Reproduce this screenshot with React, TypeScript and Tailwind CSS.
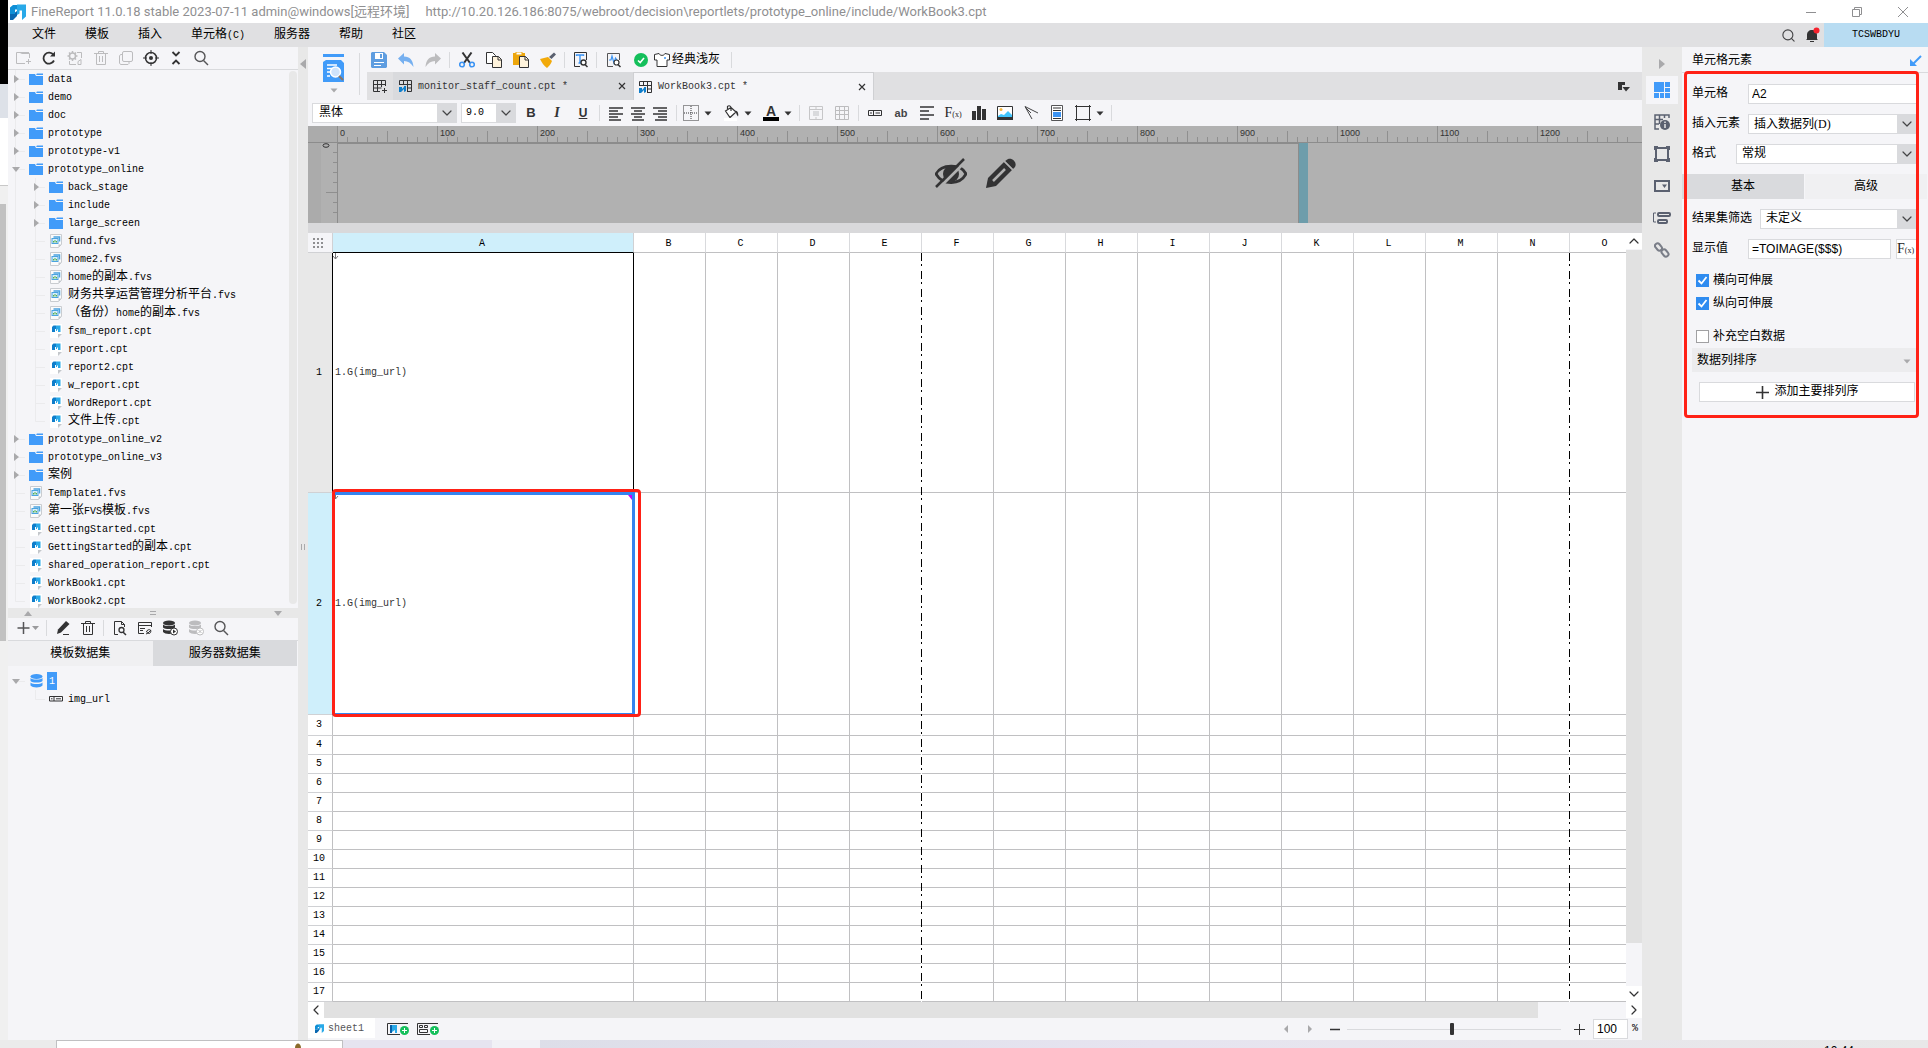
import { ReactNode } from "react";
import { ChevronDown, ChevronLeft, ChevronRight, ChevronUp, Search } from "lucide-react";

type Kind = "folder" | "fvs" | "cpt";

const files: { name: string; kind: Kind; level?: number; open?: boolean; last?: boolean }[] = [
  { name: "data", kind: "folder" },
  { name: "demo", kind: "folder" },
  { name: "doc", kind: "folder" },
  { name: "prototype", kind: "folder" },
  { name: "prototype-v1", kind: "folder" },
  { name: "prototype_online", kind: "folder", open: true },
  { name: "back_stage", kind: "folder", level: 2 },
  { name: "include", kind: "folder", level: 2 },
  { name: "large_screen", kind: "folder", level: 2 },
  { name: "fund.fvs", kind: "fvs", level: 2 },
  { name: "home2.fvs", kind: "fvs", level: 2 },
  { name: "home的副本.fvs", kind: "fvs", level: 2 },
  { name: "财务共享运营管理分析平台.fvs", kind: "fvs", level: 2 },
  { name: "（备份）home的副本.fvs", kind: "fvs", level: 2 },
  { name: "fsm_report.cpt", kind: "cpt", level: 2 },
  { name: "report.cpt", kind: "cpt", level: 2 },
  { name: "report2.cpt", kind: "cpt", level: 2 },
  { name: "w_report.cpt", kind: "cpt", level: 2 },
  { name: "WordReport.cpt", kind: "cpt", level: 2 },
  { name: "文件上传.cpt", kind: "cpt", level: 2, last: true },
  { name: "prototype_online_v2", kind: "folder" },
  { name: "prototype_online_v3", kind: "folder" },
  { name: "案例", kind: "folder" },
  { name: "Template1.fvs", kind: "fvs" },
  { name: "第一张FVS模板.fvs", kind: "fvs" },
  { name: "GettingStarted.cpt", kind: "cpt" },
  { name: "GettingStarted的副本.cpt", kind: "cpt" },
  { name: "shared_operation_report.cpt", kind: "cpt" },
  { name: "WorkBook1.cpt", kind: "cpt" },
  { name: "WorkBook2.cpt", kind: "cpt", last: true },
];

const menus = ["文件", "模板", "插入", "单元格(C)", "服务器", "帮助", "社区"];
const columns = "ABCDEFGHIJKLMNO".split("");
const rows = Array.from({ length: 17 }, (_, i) => i + 1);

// Latin letters are set smaller so that they take half the width of a Chinese one
function Txt({ text }: { text: string }) {
  return (
    <span className="whitespace-nowrap">
      {text.split(/([\x20-\x7e]+)/).filter(Boolean).map((run, i) =>
        /[\x20-\x7e]/.test(run) ? (
          <span key={i} className="text-[10px]">{run}</span>
        ) : (
          run
        )
      )}
    </span>
  );
}

function Svg(props: { w?: number; h?: number; children: ReactNode }) {
  const { w = 16, h = 16 } = props;
  return (
    <svg width={w} height={h} viewBox={`0 0 ${w} ${h}`} fill="none" className="block shrink-0" aria-hidden="true">
      {props.children}
    </svg>
  );
}

function Tool(props: { label: string; className?: string; children: ReactNode }) {
  return (
    <button
      type="button"
      aria-label={props.label}
      className={`flex h-full shrink-0 items-center justify-center ${props.className ?? "w-[26px]"}`}
    >
      {props.children}
    </button>
  );
}

function Sep() {
  return <div className="mx-[3px] h-4 w-px shrink-0 bg-[#d9dadd]" />;
}

function Caret({ color = "#333334" }: { color?: string }) {
  return (
    <Svg w={8} h={5}>
      <path d="M0.5 0.5h7L4 4.5z" fill={color} />
    </Svg>
  );
}

function Logo({ size = 16 }: { size?: number }) {
  return (
    <svg width={size} height={size} viewBox="0 0 16 16" className="block shrink-0" aria-hidden="true">
      <path d="M0 3.500L3 1h4v4.500H5V10H0z" fill="#0f8fd6" />
      <path d="M0 10h5V8.500L7 7v5l-4 4H0z" fill="#0967b0" />
      <path d="M7 .5h9v12L12 16V6.500H9.500v3L7 11z" fill="#29a9e8" />
    </svg>
  );
}

function FileIcon({ kind }: { kind: Kind }) {
  if (kind === "folder") {
    return (
      <Svg w={14} h={14}>
        <path d="M0 2h6l1 2h7v9H0z" fill="#419bf9" />
        <path d="M7 2.500l1-1h6v1.500H8z" fill="#419bf9" />
      </Svg>
    );
  }
  if (kind === "fvs") {
    return (
      <Svg w={14} h={14}>
        <path d="M1.500.5h11v10l-3 3h-8z" fill="#fbfbfc" stroke="#c9ccd0" />
        <path d="M4.500 3h6v4.500" stroke="#4aa3e0" strokeWidth="1.500" />
        <rect x="3" y="4.500" width="6" height="5" fill="#d9eefc" stroke="#4aa3e0" />
        <path d="M4.500 8.500V7m1.500 1.500V6m1.500 2.500V7" stroke="#55b04c" />
        <path d="M9.500 13.500v-3h3z" fill="#c4c7cb" />
      </Svg>
    );
  }
  return (
    <Svg w={14} h={14}>
      <path d="M1 0h12v10l-4 4H1z" fill="#fff" />
      <path d="M9 14v-4h4z" fill="#c4c7cb" />
      <path d="M3 3l1.500-1.500H7V5H6v3H3z" fill="#0f7ecb" />
      <path d="M7 1.500h4.500V8H9V5.500H8V7H7z" fill="#29a9e8" />
    </Svg>
  );
}

function Guide(props: { arrow?: "right" | "down"; half?: boolean }) {
  return (
    <Svg w={20} h={18}>
      <path d={props.half ? "M7.500 0v9.500H17" : "M7.500 0v18M7.500 9.500H17"} stroke="#ebebed" />
      {props.arrow === "right" && <path d="M6 5l5 4-5 4z" fill="#a9a9ab" />}
      {props.arrow === "down" && <path d="M4 7h8l-4 5z" fill="#a9a9ab" />}
    </Svg>
  );
}

function FileRow({ file }: { file: (typeof files)[number] }) {
  const arrow = file.kind === "folder" ? (file.open ? "down" : "right") : undefined;
  return (
    <li className="flex h-[18px] items-center">
      {file.level === 2 && (
        <Svg w={20} h={18}>
          <path d="M7.500 0v18" stroke="#ebebed" />
        </Svg>
      )}
      <Guide arrow={arrow} half={file.last} />
      <span className="mr-[5px] ml-px"><FileIcon kind={file.kind} /></span>
      <Txt text={file.name} />
    </li>
  );
}

function DbIcon({ color, children }: { color: string; children?: ReactNode }) {
  return (
    <Svg>
      <ellipse cx="7" cy="3" rx="6" ry="2.500" fill={color} />
      <path d="M1 4.500c2 2 10 2 12 0v3c-2 2-10 2-12 0zM1 9c2 2 10 2 12 0v3c-2 2.500-10 2.500-12 0z" fill={color} />
      {children}
    </Svg>
  );
}

function SearchIcon() {
  return (
    <Svg>
      <circle cx="7" cy="6.500" r="5" stroke="#555557" strokeWidth="1.400" />
      <path d="M10.500 10.500L15 15" stroke="#555557" strokeWidth="1.400" />
    </Svg>
  );
}

function LeftPanel() {
  return (
    <aside className="flex w-[290px] shrink-0 flex-col bg-[#f5f5f8]">
      <div className="flex h-[23px] shrink-0 items-center border-b border-[#d9dadd] pl-0.5">
        <Tool label="新建文件夹">
          <Svg>
            <path d="M14.500 8V3.500H7L5 2.500H1.500v11H10M5 2.500h9M13.500 9v5M11 11.500h5" stroke="#bcbcbe" />
          </Svg>
        </Tool>
        <Tool label="刷新">
          <Svg>
            <path d="M13 10.500A5.500 5.500 0 1 1 12.500 5" stroke="#333334" strokeWidth="1.800" />
            <path d="M14 1.500v5H9z" fill="#333334" />
          </Svg>
        </Tool>
        <Tool label="设置">
          <Svg>
            <circle cx="5.500" cy="6" r="3" stroke="#bcbcbe" strokeWidth="1.500" />
            <path d="M5.500 1v10M.5 6h10M2 2.500l7 7M9 2.500l-7 7" stroke="#bcbcbe" strokeDasharray="2 6" strokeWidth="1.500" />
            <path d="M10 2.500h4.500V8M2.500 11v3.500H9M11 14.500v-3l3-2v5z" stroke="#bcbcbe" />
          </Svg>
        </Tool>
        <Tool label="删除" className="w-[25px]">
          <Svg>
            <path d="M1 3.500h14M5.500 3V1.500h5V3M3.500 4v10.500h9V4M6.500 6v6M9.500 6v6" stroke="#bcbcbe" />
          </Svg>
        </Tool>
        <Tool label="复制" className="w-[25px]">
          <Svg>
            <rect x="4.500" y="1.500" width="10" height="10" rx="1.500" stroke="#bcbcbe" />
            <path d="M4 4.500H2.500L1.500 6v7l1 1.500H10l1-1V12" stroke="#bcbcbe" />
          </Svg>
        </Tool>
        <Tool label="定位" className="w-[25px]">
          <Svg>
            <circle cx="8" cy="8" r="5.500" stroke="#333334" strokeWidth="1.500" />
            <circle cx="8" cy="8" r="2" fill="#333334" />
            <path d="M8 0v4M8 12v4M0 8h4M12 8h4" stroke="#333334" />
          </Svg>
        </Tool>
        <Tool label="收起" className="w-[25px]">
          <Svg>
            <path d="M4.500 2L8 5.500 11.500 2M4.500 14L8 10.500l3.500 3.500" stroke="#333334" strokeWidth="1.800" />
          </Svg>
        </Tool>
        <Tool label="搜索模板"><SearchIcon /></Tool>
      </div>
      <div className="flex h-[538px] shrink-0 justify-between overflow-hidden">
        <ul>
          {files.map((file) => (
            <FileRow key={file.name} file={file} />
          ))}
        </ul>
        <div className="mt-px mr-px mb-1 w-2 rounded bg-[#e8e8e8]" />
      </div>
      <div className="flex h-[10px] shrink-0 items-center justify-between bg-[#e8e8e8] px-4">
        <Svg w={8} h={5}><path d="M0 5h8L4 0z" fill="#a9a9ab" /></Svg>
        <Svg w={6} h={4}><path d="M0 .5h6M0 3.500h6" stroke="#a9a9ab" /></Svg>
        <Svg w={8} h={5}><path d="M0 0h8L4 5z" fill="#a9a9ab" /></Svg>
      </div>
      <div className="flex h-[23px] shrink-0 items-center border-b border-[#d9dadd] pb-0.5 pl-[7px]">
        <Tool label="新增数据集" className="mr-0.5 w-[26px]">
          <Svg w={24}>
            <path d="M7.500 2v12M1.500 8h12" stroke="#555557" strokeWidth="1.500" />
            <path d="M16 6h7l-3.500 4z" fill="#9a9a9c" />
          </Svg>
        </Tool>
        <Sep />
        <Tool label="编辑" className="w-[25px]">
          <Svg>
            <path d="M2 14l1-4.500L11 1l3.500 3L6 12.500z" fill="#333334" />
            <path d="M8 14.500h6" stroke="#333334" />
          </Svg>
        </Tool>
        <Tool label="删除数据集" className="w-[25px]">
          <Svg>
            <path d="M1 3.500h14M5.500 3V1.500h5V3M3.500 4v10.500h9V4M6.500 6v6M9.500 6v6" stroke="#333334" />
          </Svg>
        </Tool>
        <Sep />
        <Tool label="预览" className="w-[25px]">
          <Svg>
            <path d="M6 14.500H2.500v-13h7l3 3V7M9.500 1.500v3h3" stroke="#333334" />
            <circle cx="9.500" cy="10" r="2.500" stroke="#333334" strokeWidth="1.300" />
            <path d="M11 12l3 3" stroke="#333334" strokeWidth="1.500" />
          </Svg>
        </Tool>
        <Tool label="连接" className="w-[25px]">
          <Svg>
            <path d="M7 13.500H1.500v-11h13V7M1.500 5.500h13M3 8.500h5M3 10.500h3" stroke="#333334" />
            <path d="M9 14l2-1 3-3M9.500 12c0-2 3-3 4-2s0 4-2 3.500z" stroke="#333334" />
          </Svg>
        </Tool>
        <Tool label="运行数据集">
          <DbIcon color="#333334">
            <circle cx="12" cy="11.500" r="3.500" fill="#fff" stroke="#333334" />
            <path d="M11 9.500l3 2-3 2z" fill="#333334" />
          </DbIcon>
        </Tool>
        <Tool label="清除数据集" className="w-[25px]">
          <DbIcon color="#bcbcbe">
            <circle cx="12" cy="11.500" r="3.500" fill="#fff" stroke="#bcbcbe" />
            <path d="M10.500 10l3 3M13.500 10l-3 3" stroke="#bcbcbe" />
          </DbIcon>
        </Tool>
        <Tool label="搜索数据集" className="w-[25px]"><SearchIcon /></Tool>
      </div>
      <div className="mr-px flex h-[25px] shrink-0">
        <button type="button" className="flex-1 bg-[#f0f0f2]">模板数据集</button>
        <button type="button" className="flex-1 bg-[#d9dadd]">服务器数据集</button>
      </div>
      <ul className="flex-1 pt-1.5">
        <li className="flex h-[18px] items-center">
          <Svg w={20} h={18}>
            <path d="M8 9.500h9" stroke="#ebebed" />
            <path d="M4 7h8l-4 5z" fill="#a9a9ab" />
          </Svg>
          <span className="mr-1 ml-0.5">
            <Svg w={13} h={16}>
              <ellipse cx="6.500" cy="3.500" rx="6" ry="2.500" fill="#419bf9" />
              <path d="M.5 5c2 2 10 2 12 0v3c-2 2-10 2-12 0zM.5 9.500c2 2 10 2 12 0v3c-2 2.500-10 2.500-12 0z" fill="#419bf9" />
            </Svg>
          </span>
          <span className="h-[18px] bg-[#419bf9] px-0.5 leading-[18px] text-white"><Txt text="1" /></span>
        </li>
        <li className="flex h-[18px] items-center pl-5">
          <Svg w={20} h={18}><path d="M7.500 0v9.500H17" stroke="#ebebed" /></Svg>
          <span className="mr-[5px] ml-px">
            <Svg w={14} h={6}>
              <path d="M.5.5h13v4.500H.5zM5 .5V5M7 2.800h5M2 2.800h1.500" stroke="#333334" />
            </Svg>
          </span>
          <Txt text="img_url" />
        </li>
      </ul>
    </aside>
  );
}

function Splitter() {
  return (
    <div className="flex w-[10px] shrink-0 flex-col items-center bg-[#e8e8e8] pt-3">
      <Svg w={6} h={10}><path d="M6 0v10L0 5z" fill="#a9a9ab" /></Svg>
      <div className="flex flex-1 items-center pb-4">
        <Svg w={4} h={6}><path d="M.5 0v6M3.500 0v6" stroke="#a9a9ab" /></Svg>
      </div>
    </div>
  );
}

function TableIcon() {
  return (
    <Svg>
      <path d="M1.500 7V2.500h12v11H9M1.500 6.500h12M5.500 2.500V7M9.500 2.500v11M9.500 10h4" stroke="#333334" />
      <path d="M1 9h3v2l2-2V8h2v5l-2 1v-3l-3 3H1z" fill="#0f7ecb" />
    </Svg>
  );
}

function MainToolbar() {
  return (
    <div className="flex h-[25px] items-center">
      <Tool label="保存" className="w-[27px]">
        <Svg>
          <path d="M0 1l1-1h12l3 3v12l-1 1H1l-1-1z" fill="#5e9de0" />
          <path d="M4 1h8v6H4z" fill="#fff" />
          <path d="M9 2h2v4H9z" fill="#5e9de0" />
          <path d="M3 10.500h10M3 13.500h7" stroke="#fff" />
        </Svg>
      </Tool>
      <Tool label="撤销" className="w-[27px]">
        <Svg><path d="M0 6.500L6 1v3.500c6 0 9 4 9.500 10.500C13 11 10 9 6 9v3.500z" fill="#76b0f0" /></Svg>
      </Tool>
      <Tool label="重做" className="w-[27px]">
        <Svg><path d="M16 6.500L10 1v3.500C4 4.500 1 8.500.5 15 3 11 6 9 10 9v3.500z" fill="#bcbcbe" /></Svg>
      </Tool>
      <Sep />
      <Tool label="剪切" className="w-[27px]">
        <Svg>
          <path d="M3.500.5L11 11M12.500.5L5 11" stroke="#333334" strokeWidth="2" />
          <circle cx="3" cy="12.500" r="2.300" stroke="#3c94f3" strokeWidth="1.600" />
          <circle cx="13" cy="12.500" r="2.300" stroke="#3c94f3" strokeWidth="1.600" />
        </Svg>
      </Tool>
      <Tool label="复制" className="w-[27px]">
        <Svg>
          <path d="M.5.5h6l3 3v8h-9z" fill="#fff" stroke="#333334" />
          <path d="M6.500 4.500h6l3 3v8h-9z" fill="#fff3dc" stroke="#333334" />
          <path d="M12 4.500V8h3.500" stroke="#333334" />
        </Svg>
      </Tool>
      <Tool label="粘贴" className="w-[27px]">
        <Svg>
          <path d="M0 1h12v12H0z" fill="#eda60c" />
          <path d="M3 0h6v3H3z" fill="#fff" stroke="#eda60c" />
          <path d="M6.500 4.500h6l3 3v8h-9z" fill="#fff3dc" stroke="#333334" />
          <path d="M12 4.500V8h3.500" stroke="#333334" />
        </Svg>
      </Tool>
      <Tool label="格式刷" className="w-[27px]">
        <Svg>
          <path d="M9 5l5-4.500 2 2L11.500 7z" fill="#5b6170" />
          <path d="M0 7l8-2 4 4c-1 3-3 5-5 7C4 14 2 11 0 7z" fill="#f2aa0a" />
        </Svg>
      </Tool>
      <Sep />
      <Tool label="替换" className="w-[25px]">
        <Svg>
          <path d="M7 14.500H1.500v-14h12V8" stroke="#333334" />
          <path d="M3.500 4V3h7v1M7 3v8M5.500 11h3" stroke="#3c94f3" strokeWidth="1.400" />
          <circle cx="10.500" cy="10.500" r="2.500" fill="#fff" stroke="#333334" strokeWidth="1.400" />
          <path d="M12 12.500l2.500 2.500" stroke="#333334" strokeWidth="1.500" />
        </Svg>
      </Tool>
      <Sep />
      <Tool label="性能" className="w-[27px]">
        <Svg>
          <path d="M7 14.500H1.500v-13h12V8" stroke="#555557" />
          <path d="M3 8h2l1-4 2 7 1.500-5L11 8" stroke="#3c94f3" strokeWidth="1.200" />
          <circle cx="10.500" cy="10.500" r="2.500" fill="#fff" stroke="#333334" strokeWidth="1.200" />
          <path d="M12 12.500l2.500 2.500" stroke="#333334" strokeWidth="1.500" />
        </Svg>
      </Tool>
      <Tool label="检测" className="w-[27px]">
        <Svg>
          <circle cx="8" cy="8" r="7" fill="#14bf5b" />
          <path d="M5 8.500l2.200 2L11 6" stroke="#fff" strokeWidth="1.600" />
        </Svg>
      </Tool>
      <button type="button" className="flex items-center gap-0.5">
        <Svg>
          <path d="M5 1.500L.5 2.500V8H3v6.500h10V8h2.500V2.500L11 1.500C10 4 6 4 5 1.500z" fill="#fff" stroke="#333334" />
          <circle cx="11" cy="6" r="1" fill="#3c94f3" />
        </Svg>
        经典浅灰
      </button>
      <div className="ml-2"><Sep /></div>
    </div>
  );
}

function CloseTab({ label }: { label: string }) {
  return (
    <button type="button" aria-label={`关闭 ${label}`}>
      <Svg w={8} h={8}><path d="M1 1l6 6M7 1L1 7" stroke="#333334" strokeWidth="1.200" /></Svg>
    </button>
  );
}

function WorkbookTabs() {
  return (
    <div className="ml-0.5 flex h-7 items-stretch bg-[#e0e0e2]">
      <Tool label="新建模板">
        <Svg>
          <path d="M8 13.500H1.500v-11h12V8M1.500 6.500h12M1.500 10h8M5.500 2.500v11M9.500 2.500V9M12.500 10v5M10 12.500h5" stroke="#333334" />
        </Svg>
      </Tool>
      <div className="flex w-[240px] items-center bg-[#d9dadd] pr-[7px] pl-[5px] text-[#333334]">
        <TableIcon />
        <span className="ml-1 flex-1"><Txt text="monitor_staff_count.cpt *" /></span>
        <CloseTab label="monitor_staff_count.cpt" />
      </div>
      <div className="flex w-[241px] items-center border-x border-t border-[#cfd0d3] bg-[#f5f5f8] pr-[7px] pl-1 text-[#333334]">
        <TableIcon />
        <span className="ml-1 flex-1"><Txt text="WorkBook3.cpt *" /></span>
        <CloseTab label="WorkBook3.cpt" />
      </div>
      <div className="flex flex-1 items-center justify-end pr-3">
        <button type="button" aria-label="模板列表">
          <Svg w={12} h={11}>
            <path d="M0 1h7v3H4v5H0z" fill="#333334" />
            <path d="M4.500 6h7.500L8 10.500z" fill="#333334" />
          </Svg>
        </button>
      </div>
    </div>
  );
}

function Combo(props: { label: string; value: string; id?: string; className: string; selectClass?: string }) {
  return (
    <div className={`flex h-5 border border-[#d9dadd] bg-white ${props.className}`}>
      <select
        id={props.id}
        aria-label={props.id ? undefined : props.label}
        className={`min-w-0 flex-1 appearance-none bg-white leading-[18px] outline-none ${props.selectClass ?? "pl-1.5"}`}
      >
        <option>{props.value}</option>
      </select>
      <div className="flex w-[19px] shrink-0 items-center justify-center bg-[#d9dadd]">
        <ChevronDown size={16} strokeWidth={1.8} color="#444446" />
      </div>
    </div>
  );
}

function Align({ d }: { d: string }) {
  return <Svg><path d={d} stroke="#333334" strokeWidth="1.500" /></Svg>;
}

function FormatToolbar() {
  return (
    <div className="flex h-[26px] shrink-0 items-center pl-1">
      <Combo label="字体" value="黑体" className="mr-1 w-[145px]" />
      <Combo label="字号" value="9.0" className="mr-0.5 w-[55px]" selectClass="pl-1 text-[10px]" />
      <Tool label="加粗"><b className="font-['Liberation_Sans'] text-[13px] text-[#333334]">B</b></Tool>
      <Tool label="斜体"><i className="font-['Liberation_Serif'] text-[14px] font-bold text-[#333334]">I</i></Tool>
      <Tool label="下划线"><u className="font-['Liberation_Sans'] text-[12px] font-bold text-[#333334]">U</u></Tool>
      <Sep />
      <Tool label="左对齐" className="ml-0.5 w-[22px]"><Align d="M1 3h14M1 6h9M1 9h14M1 12h9M1 15h12" /></Tool>
      <Tool label="居中" className="w-[22px]"><Align d="M1 3h14M4 6h8M1 9h14M4 12h8M2 15h12" /></Tool>
      <Tool label="右对齐" className="w-[22px]"><Align d="M1 3h14M6 6h9M1 9h14M6 12h9M3 15h12" /></Tool>
      <div className="w-0.5" />
      <Sep />
      <Tool label="边框" className="w-[22px]">
        <Svg>
          <path d="M.5.5h15v15H.5z" stroke="#333334" strokeDasharray="1 1" />
          <path d="M8 1v14M1 8h14" stroke="#333334" strokeDasharray="1 1" />
        </Svg>
      </Tool>
      <Tool label="边框选项" className="w-3"><Caret /></Tool>
      <Tool label="背景" className="ml-1.5 w-[22px]">
        <Svg>
          <path d="M2.500 6L8 2.500l5 4.500-6 5.500zM4.500 4V1.500C6 0 8 1 8 3v3" fill="#fff" stroke="#333334" strokeWidth="1.200" />
          <path d="M12.500 5.500c3 1 3 4 2.500 6-1-1-2-3-2.500-6z" fill="#333334" />
          <path d="M1 13h13v3H1z" fill="#fff" />
        </Svg>
      </Tool>
      <Tool label="背景选项" className="w-3"><Caret /></Tool>
      <Tool label="文字颜色" className="ml-1.5 w-[22px]">
        <span className="w-4 border-b-4 border-black text-center font-['Liberation_Sans'] text-[14px] leading-3 font-bold text-[#333334]">A</span>
      </Tool>
      <Tool label="颜色选项" className="w-3"><Caret /></Tool>
      <div className="ml-0.5"><Sep /></div>
      <Tool label="合并">
        <Svg>
          <path d="M1.500 1.500h13v13h-13zM1.500 4.500h13M8 1.500v3M8 12v2.500" stroke="#c6c6c8" />
          <path d="M5 6h6v5H5z" fill="#d9dadd" />
        </Svg>
      </Tool>
      <Tool label="取消合并">
        <Svg><path d="M1.500 1.500h13v13h-13zM1.500 5.500h13M1.500 9.500h13M5.500 1.500v13M10.500 1.500v13" stroke="#bcbcbe" /></Svg>
      </Tool>
      <Sep />
      <Tool label="数据列">
        <Svg w={14} h={8}><path d="M.5 1.500h13v5H.5zM5.500 1.500v5M7.500 4H12M2 4h2" stroke="#333334" /></Svg>
      </Tool>
      <Tool label="普通文本"><span className="font-['Liberation_Sans'] text-[11px] font-bold text-[#444446]">ab</span></Tool>
      <Tool label="富文本"><Align d="M1 2h14M1 6h9M1 10h14M1 14h9" /></Tool>
      <Tool label="公式"><Fx /></Tool>
      <Tool label="图表">
        <Svg><path d="M1 6h4v9H1zM6 1h4v14H6zM11 4h4v11h-4z" fill="#333334" /></Svg>
      </Tool>
      <Tool label="图片">
        <Svg>
          <path d="M.5 1.500h15v13H.5z" fill="#fff" stroke="#333334" />
          <circle cx="4" cy="4.500" r="1.500" fill="#f5b73d" />
          <path d="M1 11l3-2 3 1 4-4 4 4v2H1z" fill="#41c4fb" />
          <path d="M0 12h16v3H0z" fill="#333334" />
        </Svg>
      </Tool>
      <Tool label="斜线">
        <Svg><path d="M2 1.500L15 8M2 1.500L9 14M2 2l6 6" stroke="#444446" /></Svg>
      </Tool>
      <Tool label="子报表">
        <Svg>
          <path d="M2.500.5h11v15h-11z" fill="#fff" stroke="#555557" />
          <path d="M4 3h8M4 5.500h8M4 13.500h8" stroke="#333334" />
          <path d="M4 7h8v5H4z" fill="#3c94f3" />
        </Svg>
      </Tool>
      <Tool label="悬浮元素">
        <Svg><path d="M1.500 0v16M14.500 0v16M0 1.500h16M0 14.500h16" stroke="#333334" /></Svg>
      </Tool>
      <Caret />
      <div className="ml-1"><Sep /></div>
    </div>
  );
}

function Fx() {
  return (
    <span className="font-['Liberation_Serif'] text-[14px] leading-none whitespace-nowrap text-[#222223]">
      F<span className="text-[8px]">(x)</span>
    </span>
  );
}

const minorTicks = "M10.500 11v5M20.500 11v5M30.500 11v5M40.500 11v5M50.500 5v11M60.500 11v5M70.500 11v5M80.500 11v5M90.500 11v5";

function ParamPane() {
  return (
    <div className="relative flex h-[97px] shrink-0 flex-col overflow-hidden bg-[#b1b1b1]">
      <div className="flex h-[17px] shrink-0 border-b border-[#8c8c8c]">
        <div className="w-[29px] shrink-0 bg-[#ababab]" />
        {Array.from({ length: 13 }, (_, i) => (
          <div key={i} className="relative h-4 w-[100px] shrink-0">
            <Svg w={100}><path d={"M.5 0v16" + minorTicks} stroke="#8f8f8f" /></Svg>
            <span className="absolute top-0.5 left-[3px] font-['Liberation_Sans'] text-[9px] leading-[10px] text-[#333334]">
              {i * 100}
            </span>
          </div>
        ))}
      </div>
      <div className="flex flex-1">
        <div className="w-[13px] bg-[#ababab]" />
        <div className="flex w-4 flex-col">
          <Svg h={80}>
            <path d="M12 9.500h4M12 19.500h4M12 29.500h4M12 39.500h4M5 49.500h11M12 59.500h4M12 69.500h4" stroke="#8f8f8f" />
            <ellipse cx="5" cy="2.500" rx="3" ry="1.800" stroke="#333334" />
          </Svg>
        </div>
        <div className="w-[962px] border-x border-t border-[#8c8c8c]" />
        <div className="w-[9px] bg-[#6e9dab]" />
      </div>
      <div className="absolute inset-x-0 top-8 flex justify-center gap-[19px]">
        <button type="button" aria-label="隐藏参数面板">
          <Svg w={32} h={30}>
            <path d="M1 16C6 6 26 5 31 16 25 27 8 28 1 16z" stroke="#333334" strokeWidth="2.800" />
            <circle cx="16" cy="16" r="8" fill="#333334" />
            <path d="M4 30L31 3" stroke="#b1b1b1" strokeWidth="3" />
            <path d="M1 29L29 1" stroke="#333334" strokeWidth="2.500" />
          </Svg>
        </button>
        <button type="button" aria-label="编辑参数面板">
          <Svg w={30} h={30}>
            <path d="M0 30l2-10L18 4l8 8-16 16z" fill="#333334" />
            <path d="M20 2.500c4-5 12 1 9 6.500l-2 2-8-8z" fill="#333334" />
            <path d="M7 23L19 11" stroke="#b1b1b1" strokeWidth="2.500" />
            <path d="M18.500 3.500l8 8" stroke="#b1b1b1" strokeWidth="1.500" />
          </Svg>
        </button>
      </div>
    </div>
  );
}

function rowHeight(row: number) {
  if (row === 1) return "h-[240px]";
  if (row === 2) return "h-[222px]";
  return row === 3 ? "h-[21px]" : "h-[19px]";
}

function PageBreak({ className }: { className: string }) {
  return (
    <div
      className={`absolute top-5 bottom-0 w-px bg-[repeating-linear-gradient(to_bottom,#000_0_8px,#fff_8px_11px,#000_11px_13px,#fff_13px_18px)] ${className}`}
    />
  );
}

function CellText() {
  return <span className="pl-0.5 text-[10px] text-[#333334]">1.G(img_url)</span>;
}

function ExpandMark() {
  return (
    <span className="absolute top-0 left-0">
      <Svg w={6} h={7}><path d="M2.500 0v6M0 3l2.500 3L5 3" stroke="#777779" /></Svg>
    </span>
  );
}

function Grid() {
  return (
    <div className="relative min-w-0 flex-1 overflow-hidden bg-white">
      <table className="w-[1334px] table-fixed border-separate border-spacing-0">
        <colgroup>
          <col className="w-[25px]" />
          <col className="w-[301px]" />
          {columns.slice(1).map((c) => <col key={c} className="w-[72px]" />)}
        </colgroup>
        <thead>
          <tr className="h-5">
            <td className="border-r border-b border-[#d0d1d4] bg-[#f5f5f8] p-0">
              <div className="flex justify-center pr-1">
                <Svg w={10} h={10}>
                  <path d="M1 0v10M5 0v10M9 0v10" stroke="#8f8f91" strokeWidth="2" strokeDasharray="2 2" />
                </Svg>
              </div>
            </td>
            {columns.map((c) => (
              <th
                key={c}
                className={`border-r border-b p-0 pt-[3px] pr-0.5 text-[10px] leading-4 font-normal ${
                  c === "A" ? "border-r-[#d0d1d4] border-b-black bg-[#cfeffb]" : "border-r-[#d9dadd] border-b-[#c0c0c2]"
                }`}
              >
                {c}
              </th>
            ))}
          </tr>
        </thead>
        <tbody>
          {rows.map((row) => (
            <tr key={row} className={rowHeight(row)}>
              <th
                className={`border-r border-b border-b-[#d0d1d4] p-0 pr-0.5 text-[10px] leading-4 font-normal ${
                  row === 1 ? "border-r-black bg-[#e8e8e8]" : row === 2 ? "border-r-[#c0c0c2] bg-[#cfeffb]" : "border-r-[#c0c0c2]"
                }`}
              >
                {row}
              </th>
              {columns.map((c) => {
                if (c === "A" && row === 1) {
                  return (
                    <td key={c} className="relative border-r border-b border-r-black border-b-[#c0c0c2] p-0">
                      <ExpandMark />
                      <CellText />
                    </td>
                  );
                }
                if (c === "A" && row === 2) {
                  return (
                    <td key={c} className="relative border-r border-b border-[#c0c0c2] p-0">
                      <ExpandMark />
                      <CellText />
                      <span className="absolute -top-px -right-0.5 -bottom-px -left-px border-t-3 border-r-3 border-b-2 border-l border-[#3584ef]" />
                      <span className="absolute top-0.5 right-px">
                        <Svg w={4} h={5}><path d="M0 0h4v5z" fill="#c800ff" /></Svg>
                      </span>
                      <span className="absolute -top-1 -right-2 -bottom-[3px] -left-px z-10 rounded-sm border-3 border-[#ff2116]" />
                    </td>
                  );
                }
                return <td key={c} className="border-r border-b border-[#c0c0c2] p-0" />;
              })}
            </tr>
          ))}
        </tbody>
      </table>
      <PageBreak className="left-[613px]" />
      <PageBreak className="left-[1261px]" />
    </div>
  );
}

function ScrollButton({ label, children }: { label: string; children: ReactNode }) {
  return (
    <button type="button" aria-label={label} className="flex size-4 shrink-0 items-center justify-center bg-white text-[#333334]">
      {children}
    </button>
  );
}

function SheetBar() {
  return (
    <div className="flex h-[22px] shrink-0 items-center">
      <button type="button" className="flex h-5 w-[67px] items-center gap-1 self-start bg-white pl-[7px] text-[#555557]">
        <Logo size={9} />
        <Txt text="sheet1" />
      </button>
      <button type="button" aria-label="新增普通sheet" className="ml-3">
        <Svg w={22} h={14}>
          <path d="M21 1.500H.5v11H13" stroke="#333334" />
          <path d="M3 3h2v8H3z" fill="#0960a8" />
          <path d="M5 3h5v8H8V8L5 10z" fill="#29a9e8" />
          <circle cx="17.500" cy="8.500" r="4.500" fill="#14bf5b" />
          <path d="M17.500 6v5M15 8.500h5" stroke="#fff" />
        </Svg>
      </button>
      <button type="button" aria-label="新增聚合sheet" className="ml-2">
        <Svg w={22} h={14}>
          <path d="M21 1.500H.5v11H13M2.500 3.500h3v2h-3zM7.500 3.500h3v2h-3zM2.500 7.500h8v3h-8z" stroke="#333334" />
          <circle cx="17.500" cy="8.500" r="4.500" fill="#14bf5b" />
          <path d="M17.500 6v5M15 8.500h5" stroke="#fff" />
        </Svg>
      </button>
      <div className="flex-1" />
      <button type="button" aria-label="上一个">
        <Svg w={4} h={8}><path d="M4 0v8L0 4z" fill="#a9a9ab" /></Svg>
      </button>
      <button type="button" aria-label="下一个" className="mr-[18px] ml-5">
        <Svg w={4} h={8}><path d="M0 0v8l4-4z" fill="#a9a9ab" /></Svg>
      </button>
      <button type="button" aria-label="缩小">
        <Svg w={10} h={10}><path d="M0 5.500h10" stroke="#333334" strokeWidth="1.500" /></Svg>
      </button>
      <input
        type="range"
        aria-label="缩放比例"
        defaultValue={49}
        className="mx-[7px] h-3 w-[214px] appearance-none bg-[linear-gradient(#d9dadd,#d9dadd)] bg-[length:100%_1px] bg-center bg-no-repeat [&::-webkit-slider-thumb]:h-3 [&::-webkit-slider-thumb]:w-1 [&::-webkit-slider-thumb]:appearance-none [&::-webkit-slider-thumb]:rounded-[1px] [&::-webkit-slider-thumb]:bg-[#333334]"
      />
      <button type="button" aria-label="放大" className="ml-1.5">
        <Svg w={11} h={11}><path d="M0 5.500h11M5.500 0v11" stroke="#333334" /></Svg>
      </button>
      <input
        aria-label="缩放百分比"
        defaultValue="100"
        className="ml-2 h-5 w-[35px] border border-[#d9dadd] bg-white pl-[3px] font-['Liberation_Sans'] text-[12px]"
      />
      <span className="w-[14px] pl-1 text-[10px]">%</span>
    </div>
  );
}

function Center() {
  return (
    <main className="flex min-w-0 flex-1 flex-col bg-[#f5f5f8]">
      <div className="flex h-[53px] shrink-0">
        <div className="flex w-[51px] flex-col items-center pt-1.5">
          <button type="button" aria-label="预览" className="flex flex-col items-center gap-1.5">
            <Svg w={22} h={29}>
              <path d="M0 1h21v3H0zM0 9l3-2h15l3 3v19H0z" fill="#419bf9" />
              <path d="M4 12h10M4 15.500h5M4 19h4M4 23h3" stroke="#fff" strokeWidth="1.500" />
              <circle cx="12.500" cy="19" r="5" fill="#cfe3fb" stroke="#fff" strokeWidth="1.500" />
              <path d="M16 23l4 4" stroke="#8a7565" strokeWidth="2" />
            </Svg>
            <Caret color="#a9a9ab" />
          </button>
        </div>
        <div className="mt-1.5 mr-[5px] h-[42px] w-px bg-[#d9dadd]" />
        <div className="flex min-w-0 flex-1 flex-col">
          <MainToolbar />
          <WorkbookTabs />
        </div>
      </div>
      <FormatToolbar />
      <ParamPane />
      <div className="h-[10px] shrink-0 bg-[#d9d9db]" />
      <div className="flex min-h-0 flex-1">
        <Grid />
        <div className="flex w-4 shrink-0 flex-col">
          <ScrollButton label="向上滚动"><ChevronUp size={16} strokeWidth={1.8} /></ScrollButton>
          <div className="mt-px mb-[43px] flex-1 bg-[#e1e1e1]" />
          <ScrollButton label="向下滚动"><ChevronDown size={16} strokeWidth={1.8} /></ScrollButton>
        </div>
      </div>
      <div className="flex h-4 shrink-0">
        <ScrollButton label="向左滚动"><ChevronLeft size={16} strokeWidth={1.8} /></ScrollButton>
        <div className="mr-[88px] flex-1 bg-[#e1e1e1]" />
        <ScrollButton label="向右滚动"><ChevronRight size={16} strokeWidth={1.8} /></ScrollButton>
      </div>
      <SheetBar />
    </main>
  );
}

function SideIcons() {
  const item = "flex h-7 w-8 items-center justify-center";
  return (
    <nav className="flex w-10 shrink-0 flex-col items-center bg-[#e8e8e8] pt-3">
      <button type="button" aria-label="折叠面板" className="mb-[7px]">
        <Svg w={6} h={10}><path d="M0 0v10l6-5z" fill="#a9a9ab" /></Svg>
      </button>
      <div className="flex flex-col gap-1">
        <button type="button" aria-label="单元格元素" className={`${item} bg-[#f5f5f8]`}>
          <Svg><path d="M0 0h10v10H0zM11 0h5v5h-5zM11 6h5v4h-5zM0 11h5v5H0zM6 11h4v5H6zM11 11h5v5h-5z" fill="#419bf9" /></Svg>
        </button>
        <button type="button" aria-label="单元格属性" className={item}>
          <Svg>
            <path d="M15 4V1H1v14h4M1 5.500h8M1 10h4M5.500 1v9M10.500 1v3" stroke="#5b6170" strokeWidth="1.500" />
            <circle cx="11" cy="11" r="5" fill="#5b6170" />
            <path d="M11 10v4M11 7.500V9" stroke="#e8e8e8" strokeWidth="1.500" />
          </Svg>
        </button>
        <button type="button" aria-label="悬浮元素" className={item}>
          <Svg>
            <path d="M0 0h4v4H0zM12 0h4v4h-4zM0 12h4v4H0zM12 12h4v4h-4z" fill="#5b6170" />
            <path d="M2 2h12v12H2z" fill="#e8e8e8" stroke="#5b6170" strokeWidth="2" />
          </Svg>
        </button>
        <button type="button" aria-label="控件设置" className={item}>
          <Svg>
            <rect x="1" y="3" width="14" height="10" stroke="#5b6170" strokeWidth="2" />
            <path d="M8 6.500h5L10.500 10z" fill="#5b6170" />
          </Svg>
        </button>
        <button type="button" aria-label="条件属性" className={item}>
          <Svg w={18}>
            <path d="M3 3H.5v9H3" stroke="#5b6170" />
            <rect x="5" y="3" width="12" height="3" rx="1" stroke="#5b6170" strokeWidth="2" />
            <rect x="5" y="10" width="9" height="3" rx="1" stroke="#5b6170" strokeWidth="2" />
          </Svg>
        </button>
        <button type="button" aria-label="超级链接" className={item}>
          <Svg>
            <rect x="-4" y="-2.500" width="8" height="5" rx="2.500" transform="translate(4.500 5) rotate(50)" stroke="#7a7e88" strokeWidth="2" />
            <rect x="-4" y="-2.500" width="8" height="5" rx="2.500" transform="translate(11 11) rotate(50)" stroke="#7a7e88" strokeWidth="2" />
          </Svg>
        </button>
      </div>
    </nav>
  );
}

function Check(props: { label: string; checked?: boolean }) {
  return (
    <label className="flex h-[23px] items-center gap-1 pl-1">
      <span className="grid size-[13px]">
        <input
          type="checkbox"
          defaultChecked={props.checked}
          className="peer col-start-1 row-start-1 size-[13px] appearance-none border border-[#a0a0a2] bg-white checked:border-[#2f8cf0] checked:bg-[#2f8cf0]"
        />
        <svg viewBox="0 0 13 13" className="pointer-events-none col-start-1 row-start-1 hidden size-[13px] peer-checked:block" fill="none" aria-hidden="true">
          <path d="M2.500 6.500l3 3L10.500 3" stroke="#fff" strokeWidth="1.800" />
        </svg>
      </span>
      {props.label}
    </label>
  );
}

function PropertyPanel() {
  return (
    <aside className="flex w-[246px] shrink-0 flex-col bg-[#f5f5f8]">
      <div className="flex h-[26px] items-center justify-between border-b border-[#d9dadd] pt-0.5 pr-1.5 pl-2.5">
        单元格元素
        <button type="button" aria-label="弹出面板">
          <Svg w={12} h={12}>
            <path d="M11 1L3 9" stroke="#419bf9" strokeWidth="2" />
            <path d="M0 4v7h7z" fill="#419bf9" />
          </Svg>
        </button>
      </div>
      <div className="relative pt-[11px] pr-[11px] pl-2.5">
        <div className="flex flex-col gap-2.5">
          <div className="flex items-center">
            <label htmlFor="cell" className="w-14">单元格</label>
            <input id="cell" defaultValue="A2" className="h-5 min-w-0 flex-1 border border-[#d9dadd] bg-white pl-[3px] font-['Liberation_Sans'] text-[12px]" />
          </div>
          <div className="flex items-center">
            <label htmlFor="element" className="w-14">插入元素</label>
            <Combo id="element" label="插入元素" value="插入数据列(D)" className="min-w-0 flex-1" selectClass="pl-[5px] font-['Liberation_Serif','Noto_Sans_CJK_SC',serif]" />
          </div>
          <div className="flex items-center">
            <label htmlFor="format" className="w-11">格式</label>
            <Combo id="format" label="格式" value="常规" className="min-w-0 flex-1" selectClass="pl-[5px]" />
          </div>
        </div>
        <div className="-mr-2.5 -ml-2.5 mt-2.5 mb-2.5 flex h-[25px] gap-px">
          <button type="button" className="flex-1 bg-[#d9dadd]">基本</button>
          <button type="button" className="flex-1 bg-[#f0f0f2]">高级</button>
        </div>
        <div className="flex flex-col gap-2.5">
          <div className="flex items-center">
            <label htmlFor="filter" className="w-[68px]">结果集筛选</label>
            <Combo id="filter" label="结果集筛选" value="未定义" className="min-w-0 flex-1" selectClass="pl-[5px]" />
          </div>
          <div className="flex items-center">
            <label htmlFor="display" className="w-14">显示值</label>
            <input id="display" defaultValue="=TOIMAGE($$$)" className="h-5 min-w-0 flex-1 border border-[#d9dadd] bg-white pl-[3px] font-['Liberation_Sans'] text-[12px]" />
            <button type="button" aria-label="编辑公式" className="ml-[5px] flex h-5 w-[21px] shrink-0 items-center border border-[#d9dadd] bg-white">
              <Fx />
            </button>
          </div>
        </div>
        <div className="pt-2.5">
          <Check label="横向可伸展" checked />
          <Check label="纵向可伸展" checked />
          <div className="h-2.5" />
          <Check label="补充空白数据" />
        </div>
        <button type="button" className="flex h-6 w-full items-center justify-between bg-[#ececee] pt-0.5 pr-1.5 pl-[5px]">
          数据列排序
          <Caret color="#a9a9ab" />
        </button>
        <div className="py-2.5 pr-0.5 pl-[7px]">
          <button type="button" className="flex h-5 w-full items-center justify-center gap-1 border border-[#d9dadd] bg-white">
            <Svg w={15} h={15}><path d="M7.500 1v13M1 7.500h13" stroke="#333334" strokeWidth="1.600" /></Svg>
            添加主要排列序
          </button>
        </div>
        <div className="pointer-events-none absolute -top-0.5 right-[9px] -bottom-1.5 left-0.5 rounded-sm border-3 border-[#ff2116]" />
      </div>
    </aside>
  );
}

function TitleBar() {
  return (
    <header className="flex h-[23px] shrink-0 items-center bg-white pl-0.5 font-['Roboto','Noto_Sans_CJK_SC',sans-serif] text-[13px] leading-4 whitespace-pre text-[#8f8f91]">
      <Logo />
      <span className="ml-[5px]">FineReport 11.0.18 stable 2023-07-11 admin@windows[远程环境]</span>
      <span className="ml-4 flex-1">http://10.20.126.186:8075/webroot/decision\reportlets/prototype_online/include/WorkBook3.cpt</span>
      <div className="flex gap-9 pr-5">
        <button type="button" aria-label="最小化"><Svg w={10} h={10}><path d="M0 5.500h10" stroke="#8f8f91" /></Svg></button>
        <button type="button" aria-label="还原"><Svg w={10} h={10}><path d="M.5 2.500h7v7h-7zM2.500 2V.5h7v7H8" stroke="#8f8f91" /></Svg></button>
        <button type="button" aria-label="关闭"><Svg w={10} h={10}><path d="M0 0l10 10M10 0L0 10" stroke="#8f8f91" /></Svg></button>
      </div>
    </header>
  );
}

function MenuBar() {
  return (
    <div className="flex h-6 shrink-0 items-center bg-[#e0e0e2] pl-6">
      <nav className="flex flex-1 gap-[29px]">
        {menus.map((m) => (
          <button key={m} type="button"><Txt text={m} /></button>
        ))}
      </nav>
      <Tool label="搜索"><Search size={15} strokeWidth={1.8} color="#444446" /></Tool>
      <Tool label="消息" className="mr-px w-[22px]">
        <Svg>
          <path d="M3 12V8c0-3 2-5 5-5s5 2 5 5v4l1 1H2z" fill="#333334" />
          <path d="M6 14.500h4" stroke="#333334" />
          <circle cx="12.500" cy="3.500" r="3" fill="#f5222d" />
        </Svg>
      </Tool>
      <button type="button" className="h-full w-[104px] bg-[#b8dcf2] text-[10px]">TCSWBDYU</button>
    </div>
  );
}

export default function App() {
  return (
    <div className="flex h-screen flex-col overflow-hidden bg-[#f0f0f0] font-['Liberation_Mono','Noto_Sans_CJK_SC',monospace] text-[12px] leading-4 text-black">
      <div className="flex min-h-0 flex-1">
        <div className="flex w-2 shrink-0 flex-col">
          <div className="h-[84px] bg-black" />
          <div className="h-[34px] bg-[#dde1e8]" />
          <div className="h-[68px] border-b border-[#c8c8c8] bg-white" />
          <div className="h-[18px]" />
          <div className="mr-0.5 h-[437px] bg-[#c1c1c1]" />
        </div>
        <div className="flex min-w-0 flex-1 flex-col">
          <TitleBar />
          <MenuBar />
          <div className="flex min-h-0 flex-1">
            <LeftPanel />
            <Splitter />
            <Center />
            <SideIcons />
            <PropertyPanel />
          </div>
        </div>
      </div>
      <footer className="flex h-2 shrink-0 overflow-hidden bg-[linear-gradient(to_right,#d5d9e2,#e6e4f0_60%,#e8e8e8)]">
        <div className="w-14 bg-[#ebebeb]" />
        <div className="flex w-[287px] justify-end border border-b-0 border-[#c0c0c2] bg-white pt-0.5 pr-10">
          <Svg w={8} h={5}><path d="M1 5c0-6 6-6 6 0z" fill="#8a6a2a" /></Svg>
        </div>
        <div className="w-[149px] bg-[#e6e4f0]" />
        <div className="w-12 bg-[#f1f1f6]" />
        <time className="ml-auto pt-[3px] pr-[74px] font-['Liberation_Sans'] text-[12px]">10:44</time>
      </footer>
    </div>
  );
}
